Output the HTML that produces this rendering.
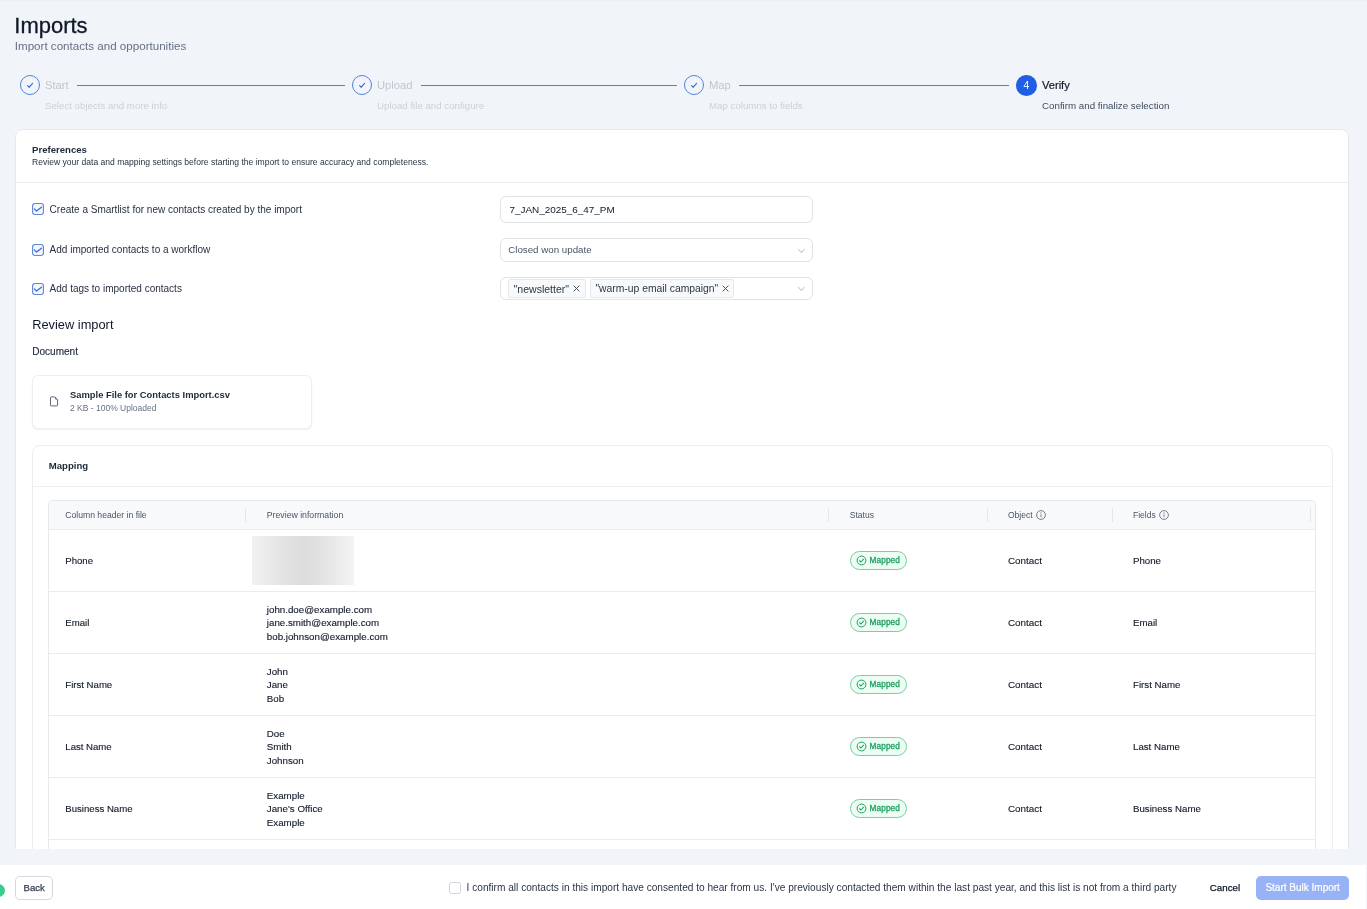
<!DOCTYPE html>
<html><head><meta charset="utf-8"><title>Imports</title>
<style>
html,body{margin:0;padding:0;}
body{width:1367px;height:909px;overflow:hidden;position:relative;background:#f1f5f9;font-family:"Liberation Sans",sans-serif;}
.a{position:absolute;box-sizing:border-box;}
.t{position:absolute;white-space:nowrap;line-height:1;}
.card{background:#fff;border:1px solid #e6e9ee;border-radius:8px;box-shadow:0 1px 2px rgba(16,24,40,0.04);}
.blur{background:linear-gradient(to right, #f1f1f1 0%, #e4e4e4 28%, #dcdcdc 50%, #dfdfdf 62%, #e9e9e9 80%, #f4f4f4 100%);}
</style></head><body>
<div id="root" style="position:absolute;left:0;top:0;width:1367px;height:909px;will-change:transform;">
<div class="a" style="left:0px;top:0px;width:1367px;height:1px;background:#ecf1f5;"></div>
<div class="t" style="left:14.30px;top:14.79px;font-size:21.99px;color:#101828;-webkit-text-stroke:0.3px #101828;">Imports</div>
<div class="t" style="left:14.80px;top:40.38px;font-size:11.6px;color:#667085;">Import contacts and opportunities</div>
<div class="a" style="left:20px;top:75px;width:20px;height:20px;border:1px solid #5282d9;border-radius:50%;"><svg width="20" height="20" viewBox="0 0 20 20" style="position:absolute;left:-1px;top:-1px"><path d="M7.6 10.7 L9.2 12.1 L12.6 8.4" fill="none" stroke="#3069d6" stroke-width="1.1" stroke-linecap="round" stroke-linejoin="round"/><path d="M8.4 11.6 L9.2 12.3 L9.9 11.5" fill="none" stroke="#3069d6" stroke-width="1"/></svg></div>
<div class="t" style="left:45.00px;top:79.82px;font-size:11.2px;color:#c2c6cc;">Start</div>
<div class="t" style="left:45.00px;top:100.59px;font-size:9.7px;color:#cdd0d5;">Select objects and more info</div>
<div class="a" style="left:77.2px;top:85px;width:267.6px;height:1px;background:#5080d6;"></div>
<div class="a" style="left:352px;top:75px;width:20px;height:20px;border:1px solid #5282d9;border-radius:50%;"><svg width="20" height="20" viewBox="0 0 20 20" style="position:absolute;left:-1px;top:-1px"><path d="M7.6 10.7 L9.2 12.1 L12.6 8.4" fill="none" stroke="#3069d6" stroke-width="1.1" stroke-linecap="round" stroke-linejoin="round"/><path d="M8.4 11.6 L9.2 12.3 L9.9 11.5" fill="none" stroke="#3069d6" stroke-width="1"/></svg></div>
<div class="t" style="left:377.00px;top:79.82px;font-size:11.2px;color:#c2c6cc;">Upload</div>
<div class="t" style="left:377.00px;top:100.59px;font-size:9.7px;color:#cdd0d5;">Upload file and configure</div>
<div class="a" style="left:421.0px;top:85px;width:255.8px;height:1px;background:#5080d6;"></div>
<div class="a" style="left:684px;top:75px;width:20px;height:20px;border:1px solid #5282d9;border-radius:50%;"><svg width="20" height="20" viewBox="0 0 20 20" style="position:absolute;left:-1px;top:-1px"><path d="M7.6 10.7 L9.2 12.1 L12.6 8.4" fill="none" stroke="#3069d6" stroke-width="1.1" stroke-linecap="round" stroke-linejoin="round"/><path d="M8.4 11.6 L9.2 12.3 L9.9 11.5" fill="none" stroke="#3069d6" stroke-width="1"/></svg></div>
<div class="t" style="left:709.00px;top:79.82px;font-size:11.2px;color:#c2c6cc;">Map</div>
<div class="t" style="left:709.00px;top:100.59px;font-size:9.7px;color:#cdd0d5;">Map columns to fields</div>
<div class="a" style="left:739.3px;top:85px;width:269.5px;height:1px;background:#5080d6;"></div>
<div class="a" style="left:1016px;top:75px;width:20.6px;height:20.6px;background:#1f5fe6;border-radius:50%;color:#fff;font-size:10.5px;line-height:20.6px;text-align:center;">4</div>
<div class="t" style="left:1042.00px;top:79.90px;font-size:11.1px;color:#101828;-webkit-text-stroke:0.2px #101828;">Verify</div>
<div class="t" style="left:1042.00px;top:100.54px;font-size:9.76px;color:#3f4b5e;">Confirm and finalize selection</div>
<div class="a card" style="left:15px;top:128.5px;width:1334px;height:760px;"></div>
<div class="t" style="left:32.00px;top:144.87px;font-size:9.61px;color:#1d2939;font-weight:700;">Preferences</div>
<div class="t" style="left:32.00px;top:157.75px;font-size:8.57px;color:#2a3342;">Review your data and mapping settings before starting the import to ensure accuracy and completeness.</div>
<div class="a" style="left:16px;top:182px;width:1332px;height:1px;background:#eaecf0;"></div>
<div class="a" style="left:32px;top:203px;width:12px;height:12px;"><svg width="12" height="12" viewBox="0 0 12 12" style="position:absolute;left:0;top:0"><rect x="0.55" y="0.55" width="10.9" height="10.9" rx="2.5" fill="#f3f6fd" stroke="#5e88d8" stroke-width="1.1"/><path d="M2.3 5.9 L4.5 8.1 L9.5 4.2" fill="none" stroke="#3a6ad4" stroke-width="1.25" stroke-linecap="round" stroke-linejoin="round"/></svg></div>
<div class="t" style="left:49.60px;top:204.53px;font-size:10px;color:#283142;">Create a Smartlist for new contacts created by the import</div>
<div class="a" style="left:32px;top:244px;width:12px;height:12px;"><svg width="12" height="12" viewBox="0 0 12 12" style="position:absolute;left:0;top:0"><rect x="0.55" y="0.55" width="10.9" height="10.9" rx="2.5" fill="#f3f6fd" stroke="#5e88d8" stroke-width="1.1"/><path d="M2.3 5.9 L4.5 8.1 L9.5 4.2" fill="none" stroke="#3a6ad4" stroke-width="1.25" stroke-linecap="round" stroke-linejoin="round"/></svg></div>
<div class="t" style="left:49.60px;top:245.13px;font-size:10px;color:#283142;">Add imported contacts to a workflow</div>
<div class="a" style="left:32px;top:283px;width:12px;height:12px;"><svg width="12" height="12" viewBox="0 0 12 12" style="position:absolute;left:0;top:0"><rect x="0.55" y="0.55" width="10.9" height="10.9" rx="2.5" fill="#f3f6fd" stroke="#5e88d8" stroke-width="1.1"/><path d="M2.3 5.9 L4.5 8.1 L9.5 4.2" fill="none" stroke="#3a6ad4" stroke-width="1.25" stroke-linecap="round" stroke-linejoin="round"/></svg></div>
<div class="t" style="left:49.60px;top:283.54px;font-size:10px;color:#283142;">Add tags to imported contacts</div>
<div class="a" style="left:500px;top:196px;width:312.6px;height:26.6px;border:1px solid #dfe2e7;border-radius:6px;background:#fff;"></div>
<div class="t" style="left:509.40px;top:204.59px;font-size:9.93px;color:#101828;">7_JAN_2025_6_47_PM</div>
<div class="a" style="left:500px;top:238.2px;width:312.6px;height:23.4px;border:1px solid #dfe2e7;border-radius:6px;background:#fff;"></div>
<div class="t" style="left:508.20px;top:245.25px;font-size:9.75px;color:#475467;">Closed won update</div>
<div class="a" style="left:796.8px;top:247.6px;width:9px;height:6px;"><svg width="9" height="6" viewBox="0 0 9 6" style="position:absolute;left:0;top:0"><path d="M1 1 L4.4 4.4 L7.8 1" fill="none" stroke="#c5c9d0" stroke-width="1.05"/></svg></div>
<div class="a" style="left:500px;top:277.4px;width:312.6px;height:22.4px;border:1px solid #dfe2e7;border-radius:6px;background:#fff;"></div>
<div class="a" style="left:508.2px;top:279.1px;width:77.4px;height:18.6px;background:#f8f9fb;border:1px solid #e6e8ec;border-radius:2px;"></div>
<div class="t" style="left:513.60px;top:283.68px;font-size:10.54px;color:#2c3545;">&quot;newsletter&quot;</div>
<div class="a" style="left:573.3px;top:285.4px;width:7px;height:7px;"><svg width="7" height="7" viewBox="0 0 7 7" style="position:absolute;left:0;top:0"><path d="M0.6 0.6 L6.4 6.4 M6.4 0.6 L0.6 6.4" stroke="#475467" stroke-width="1"/></svg></div>
<div class="a" style="left:590.2px;top:279.1px;width:143.8px;height:18.6px;background:#f8f9fb;border:1px solid #e6e8ec;border-radius:2px;"></div>
<div class="t" style="left:595.40px;top:283.84px;font-size:10.35px;color:#2c3545;">&quot;warm-up email campaign&quot;</div>
<div class="a" style="left:721.9px;top:285.4px;width:7px;height:7px;"><svg width="7" height="7" viewBox="0 0 7 7" style="position:absolute;left:0;top:0"><path d="M0.6 0.6 L6.4 6.4 M6.4 0.6 L0.6 6.4" stroke="#475467" stroke-width="1"/></svg></div>
<div class="a" style="left:796.8px;top:286.1px;width:9px;height:6px;"><svg width="9" height="6" viewBox="0 0 9 6" style="position:absolute;left:0;top:0"><path d="M1 1 L4.4 4.4 L7.8 1" fill="none" stroke="#c5c9d0" stroke-width="1.05"/></svg></div>
<div class="t" style="left:32.20px;top:319.34px;font-size:12.83px;color:#101828;">Review import</div>
<div class="t" style="left:32.20px;top:346.89px;font-size:10.05px;color:#1d2939;-webkit-text-stroke:0.15px #1d2939;">Document</div>
<div class="a" style="left:32px;top:374.5px;width:279.6px;height:54.2px;border:1px solid #eceef1;border-radius:6px;background:#fff;box-shadow:0 1px 2px rgba(16,24,40,0.06);"></div>
<div class="a" style="left:49.1px;top:395.8px;width:10px;height:11px;"><svg width="10" height="11" viewBox="0 0 10 11" style="position:absolute;left:0;top:0"><path d="M1.5 1.6 Q1.5 0.9 2.2 0.9 L5.8 0.9 L8.6 3.7 L8.6 9.2 Q8.6 9.9 7.9 9.9 L2.2 9.9 Q1.5 9.9 1.5 9.2 Z" fill="none" stroke="#5d6778" stroke-width="1" stroke-linejoin="round"/><path d="M5.8 0.9 L8.6 3.7 L6.2 3.3 Z" fill="#5d6778"/></svg></div>
<div class="t" style="left:70.00px;top:391.46px;font-size:9.38px;color:#1d2939;font-weight:700;">Sample File for Contacts Import.csv</div>
<div class="t" style="left:70.00px;top:404.00px;font-size:8.5px;color:#667085;">2 KB - 100% Uploaded</div>
<div class="a" style="left:32px;top:444.5px;width:1300.5px;height:440px;border:1px solid #ededee;border-radius:8px;background:#fff;"></div>
<div class="t" style="left:48.70px;top:461.37px;font-size:9.61px;color:#1d2939;font-weight:700;">Mapping</div>
<div class="a" style="left:33px;top:486px;width:1299px;height:1px;background:#eeeff1;"></div>
<div class="a" style="left:48px;top:500px;width:1267.8px;height:400px;border:1px solid #e8e9eb;border-radius:4px 4px 0 0;background:#fff;"></div>
<div class="a" style="left:49px;top:501px;width:1265.8px;height:29px;background:#f8f9fb;border-radius:3px 3px 0 0;border-bottom:1px solid #eaecf0;"></div>
<div class="t" style="left:65.30px;top:511.20px;font-size:8.62px;color:#475467;">Column header in file</div>
<div class="t" style="left:266.80px;top:511.13px;font-size:8.71px;color:#475467;">Preview information</div>
<div class="t" style="left:849.70px;top:511.26px;font-size:8.55px;color:#475467;">Status</div>
<div class="t" style="left:1007.90px;top:511.26px;font-size:8.55px;color:#475467;">Object</div>
<div class="t" style="left:1133.00px;top:511.26px;font-size:8.55px;color:#475467;">Fields</div>
<div class="a" style="left:1036.2px;top:510px;width:10px;height:10px;"><svg width="10" height="10" viewBox="0 0 10 10" style="position:absolute;left:0;top:0"><circle cx="5" cy="5" r="4.4" fill="none" stroke="#667085" stroke-width="0.9"/><path d="M5 4.4 L5 7.2" stroke="#667085" stroke-width="0.9"/><circle cx="5" cy="2.9" r="0.55" fill="#667085"/></svg></div>
<div class="a" style="left:1158.7px;top:510px;width:10px;height:10px;"><svg width="10" height="10" viewBox="0 0 10 10" style="position:absolute;left:0;top:0"><circle cx="5" cy="5" r="4.4" fill="none" stroke="#667085" stroke-width="0.9"/><path d="M5 4.4 L5 7.2" stroke="#667085" stroke-width="0.9"/><circle cx="5" cy="2.9" r="0.55" fill="#667085"/></svg></div>
<div class="a" style="left:245.2px;top:508px;width:1px;height:14px;background:#e4e7ec;"></div>
<div class="a" style="left:828px;top:508px;width:1px;height:14px;background:#e4e7ec;"></div>
<div class="a" style="left:987px;top:508px;width:1px;height:14px;background:#e4e7ec;"></div>
<div class="a" style="left:1112px;top:508px;width:1px;height:14px;background:#e4e7ec;"></div>
<div class="a" style="left:1310.2px;top:508px;width:1px;height:14px;background:#e4e7ec;"></div>
<div class="a" style="left:49px;top:591px;width:1266px;height:1px;background:#ebebed;"></div>
<div class="t" style="left:65.30px;top:556.47px;font-size:9.6px;color:#101828;-webkit-text-stroke:0.12px #101828;">Phone</div>
<div class="a blur" style="left:252px;top:536px;width:102px;height:49px;"></div>
<div class="a" style="left:849.7px;top:551.0px;width:57px;height:18.7px;border:1px solid #6fd3a3;border-radius:10px;background:#ecfdf3;"><svg width="11" height="11" viewBox="0 0 11 11" style="position:absolute;left:4.9px;top:3.3px"><circle cx="5.5" cy="5.5" r="4.4" fill="none" stroke="#1f9f62" stroke-width="1"/><path d="M3.5 5.7 L4.9 7 L7.6 4.2" fill="none" stroke="#1f9f62" stroke-width="1.05" stroke-linecap="round" stroke-linejoin="round"/></svg></div>
<div class="t" style="left:869.60px;top:557.06px;font-size:8.2px;color:#1f9f60;letter-spacing:0.12px;-webkit-text-stroke:0.3px #1f9f60;">Mapped</div>
<div class="t" style="left:1007.90px;top:556.22px;font-size:9.9px;color:#101828;-webkit-text-stroke:0.12px #101828;">Contact</div>
<div class="t" style="left:1133.00px;top:556.39px;font-size:9.7px;color:#101828;-webkit-text-stroke:0.12px #101828;">Phone</div>
<div class="a" style="left:49px;top:653px;width:1266px;height:1px;background:#ebebed;"></div>
<div class="t" style="left:65.30px;top:618.47px;font-size:9.6px;color:#101828;-webkit-text-stroke:0.12px #101828;">Email</div>
<div class="t" style="left:266.80px;top:605.15px;font-size:9.75px;color:#101828;-webkit-text-stroke:0.12px #101828;">john.doe@example.com</div>
<div class="t" style="left:266.80px;top:618.35px;font-size:9.75px;color:#101828;-webkit-text-stroke:0.12px #101828;">jane.smith@example.com</div>
<div class="t" style="left:266.80px;top:631.55px;font-size:9.75px;color:#101828;-webkit-text-stroke:0.12px #101828;">bob.johnson@example.com</div>
<div class="a" style="left:849.7px;top:613.0px;width:57px;height:18.7px;border:1px solid #6fd3a3;border-radius:10px;background:#ecfdf3;"><svg width="11" height="11" viewBox="0 0 11 11" style="position:absolute;left:4.9px;top:3.3px"><circle cx="5.5" cy="5.5" r="4.4" fill="none" stroke="#1f9f62" stroke-width="1"/><path d="M3.5 5.7 L4.9 7 L7.6 4.2" fill="none" stroke="#1f9f62" stroke-width="1.05" stroke-linecap="round" stroke-linejoin="round"/></svg></div>
<div class="t" style="left:869.60px;top:619.06px;font-size:8.2px;color:#1f9f60;letter-spacing:0.12px;-webkit-text-stroke:0.3px #1f9f60;">Mapped</div>
<div class="t" style="left:1007.90px;top:618.22px;font-size:9.9px;color:#101828;-webkit-text-stroke:0.12px #101828;">Contact</div>
<div class="t" style="left:1133.00px;top:618.39px;font-size:9.7px;color:#101828;-webkit-text-stroke:0.12px #101828;">Email</div>
<div class="a" style="left:49px;top:715px;width:1266px;height:1px;background:#ebebed;"></div>
<div class="t" style="left:65.30px;top:680.47px;font-size:9.6px;color:#101828;-webkit-text-stroke:0.12px #101828;">First Name</div>
<div class="t" style="left:266.80px;top:667.15px;font-size:9.75px;color:#101828;-webkit-text-stroke:0.12px #101828;">John</div>
<div class="t" style="left:266.80px;top:680.35px;font-size:9.75px;color:#101828;-webkit-text-stroke:0.12px #101828;">Jane</div>
<div class="t" style="left:266.80px;top:693.55px;font-size:9.75px;color:#101828;-webkit-text-stroke:0.12px #101828;">Bob</div>
<div class="a" style="left:849.7px;top:675.0px;width:57px;height:18.7px;border:1px solid #6fd3a3;border-radius:10px;background:#ecfdf3;"><svg width="11" height="11" viewBox="0 0 11 11" style="position:absolute;left:4.9px;top:3.3px"><circle cx="5.5" cy="5.5" r="4.4" fill="none" stroke="#1f9f62" stroke-width="1"/><path d="M3.5 5.7 L4.9 7 L7.6 4.2" fill="none" stroke="#1f9f62" stroke-width="1.05" stroke-linecap="round" stroke-linejoin="round"/></svg></div>
<div class="t" style="left:869.60px;top:681.06px;font-size:8.2px;color:#1f9f60;letter-spacing:0.12px;-webkit-text-stroke:0.3px #1f9f60;">Mapped</div>
<div class="t" style="left:1007.90px;top:680.22px;font-size:9.9px;color:#101828;-webkit-text-stroke:0.12px #101828;">Contact</div>
<div class="t" style="left:1133.00px;top:680.39px;font-size:9.7px;color:#101828;-webkit-text-stroke:0.12px #101828;">First Name</div>
<div class="a" style="left:49px;top:777px;width:1266px;height:1px;background:#ebebed;"></div>
<div class="t" style="left:65.30px;top:742.47px;font-size:9.6px;color:#101828;-webkit-text-stroke:0.12px #101828;">Last Name</div>
<div class="t" style="left:266.80px;top:729.15px;font-size:9.75px;color:#101828;-webkit-text-stroke:0.12px #101828;">Doe</div>
<div class="t" style="left:266.80px;top:742.35px;font-size:9.75px;color:#101828;-webkit-text-stroke:0.12px #101828;">Smith</div>
<div class="t" style="left:266.80px;top:755.55px;font-size:9.75px;color:#101828;-webkit-text-stroke:0.12px #101828;">Johnson</div>
<div class="a" style="left:849.7px;top:737.0px;width:57px;height:18.7px;border:1px solid #6fd3a3;border-radius:10px;background:#ecfdf3;"><svg width="11" height="11" viewBox="0 0 11 11" style="position:absolute;left:4.9px;top:3.3px"><circle cx="5.5" cy="5.5" r="4.4" fill="none" stroke="#1f9f62" stroke-width="1"/><path d="M3.5 5.7 L4.9 7 L7.6 4.2" fill="none" stroke="#1f9f62" stroke-width="1.05" stroke-linecap="round" stroke-linejoin="round"/></svg></div>
<div class="t" style="left:869.60px;top:743.06px;font-size:8.2px;color:#1f9f60;letter-spacing:0.12px;-webkit-text-stroke:0.3px #1f9f60;">Mapped</div>
<div class="t" style="left:1007.90px;top:742.22px;font-size:9.9px;color:#101828;-webkit-text-stroke:0.12px #101828;">Contact</div>
<div class="t" style="left:1133.00px;top:742.39px;font-size:9.7px;color:#101828;-webkit-text-stroke:0.12px #101828;">Last Name</div>
<div class="a" style="left:49px;top:839px;width:1266px;height:1px;background:#ebebed;"></div>
<div class="t" style="left:65.30px;top:804.47px;font-size:9.6px;color:#101828;-webkit-text-stroke:0.12px #101828;">Business Name</div>
<div class="t" style="left:266.80px;top:791.15px;font-size:9.75px;color:#101828;-webkit-text-stroke:0.12px #101828;">Example</div>
<div class="t" style="left:266.80px;top:804.35px;font-size:9.75px;color:#101828;-webkit-text-stroke:0.12px #101828;">Jane&#39;s Office</div>
<div class="t" style="left:266.80px;top:817.55px;font-size:9.75px;color:#101828;-webkit-text-stroke:0.12px #101828;">Example</div>
<div class="a" style="left:849.7px;top:799.0px;width:57px;height:18.7px;border:1px solid #6fd3a3;border-radius:10px;background:#ecfdf3;"><svg width="11" height="11" viewBox="0 0 11 11" style="position:absolute;left:4.9px;top:3.3px"><circle cx="5.5" cy="5.5" r="4.4" fill="none" stroke="#1f9f62" stroke-width="1"/><path d="M3.5 5.7 L4.9 7 L7.6 4.2" fill="none" stroke="#1f9f62" stroke-width="1.05" stroke-linecap="round" stroke-linejoin="round"/></svg></div>
<div class="t" style="left:869.60px;top:805.06px;font-size:8.2px;color:#1f9f60;letter-spacing:0.12px;-webkit-text-stroke:0.3px #1f9f60;">Mapped</div>
<div class="t" style="left:1007.90px;top:804.22px;font-size:9.9px;color:#101828;-webkit-text-stroke:0.12px #101828;">Contact</div>
<div class="t" style="left:1133.00px;top:804.39px;font-size:9.7px;color:#101828;-webkit-text-stroke:0.12px #101828;">Business Name</div>
<div class="a" style="left:0px;top:849px;width:1367px;height:16px;background:#f1f5f9;"></div>
<div class="a" style="left:0px;top:865px;width:1366px;height:44px;background:#fff;"></div>
<div class="a" style="left:-8.5px;top:884px;width:13px;height:13px;background:#38cd8f;border-radius:50%;"></div>
<div class="a" style="left:15px;top:876.2px;width:37.6px;height:23.5px;border:1px solid #d5d9df;border-radius:5px;background:#fff;"></div>
<div class="t" style="left:23.50px;top:882.89px;font-size:9.58px;color:#344054;-webkit-text-stroke:0.25px #344054;">Back</div>
<div class="a" style="left:449px;top:882.3px;width:12px;height:11.6px;border:1px solid #d0d5dd;border-radius:2.5px;background:#fff;"></div>
<div class="t" style="left:466.60px;top:882.72px;font-size:10.14px;color:#2c3545;">I confirm all contacts in this import have consented to hear from us. I&#39;ve previously contacted them within the last past year, and this list is not from a third party</div>
<div class="t" style="left:1209.80px;top:883.06px;font-size:9.73px;color:#101828;-webkit-text-stroke:0.25px #101828;">Cancel</div>
<div class="a" style="left:1256.3px;top:876.4px;width:92.3px;height:23.2px;background:#98b2f6;border-radius:5px;"></div>
<div class="t" style="left:1265.40px;top:882.83px;font-size:10.0px;color:#ffffff;-webkit-text-stroke:0.2px #ffffff;">Start Bulk Import</div>
</div>
</body></html>
